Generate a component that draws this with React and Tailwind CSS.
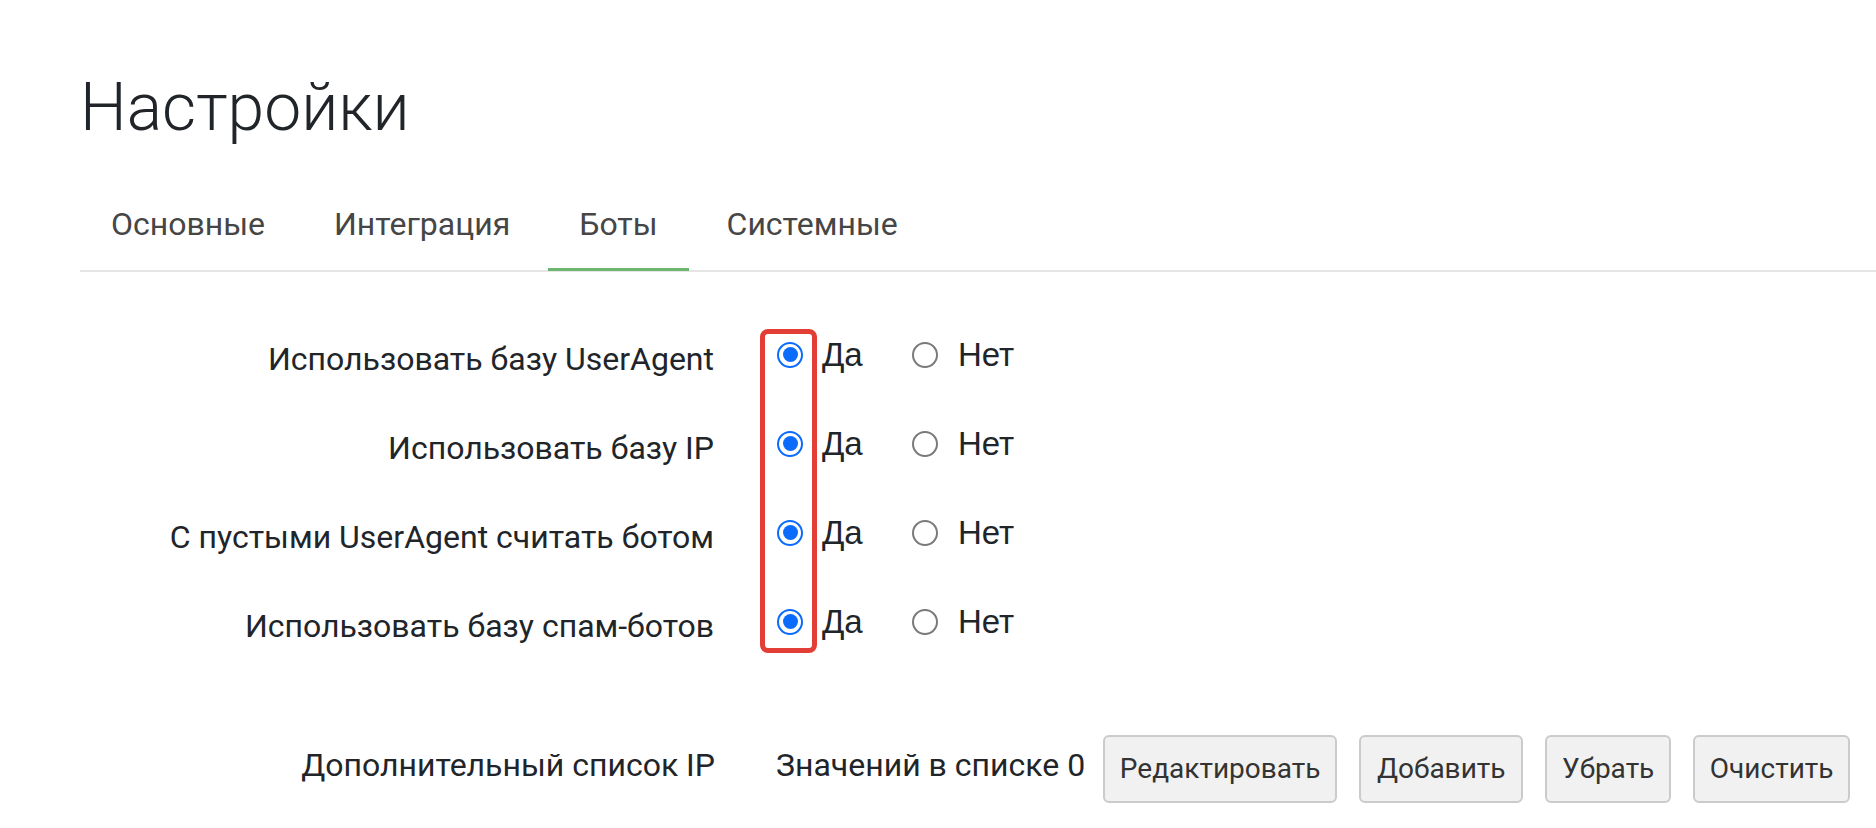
export default function App() {
  const tabs = [
    { label: "Основные", active: false },
    { label: "Интеграция", active: false },
    { label: "Боты", active: true },
    { label: "Системные", active: false },
  ];
  const rows = [
    "Использовать базу UserAgent",
    "Использовать базу IP",
    "С пустыми UserAgent считать ботом",
    "Использовать базу спам-ботов",
  ];
  const buttons = [
    { label: "Редактировать", w: "w-[234px]" },
    { label: "Добавить", w: "w-[164px]" },
    { label: "Убрать", w: "w-[126px]" },
    { label: "Очистить", w: "w-[157px]" },
  ];
  return (
    <div className="relative w-[1876px] h-[828px] bg-white overflow-hidden font-['Roboto',sans-serif] text-[#212529]">
      <h1 className="pl-[80px] pt-[67px] text-[66px] leading-[82px] font-light">Настройки</h1>

      <nav className="mt-[29px] ml-[80px] flex gap-[7px] border-b-2 border-[#e6e6e6]">
        {tabs.map((t) => (
          <div
            key={t.label}
            className={
              t.active
                ? "px-[31px] pt-[27px] pb-[25px] -mb-px text-[32px] leading-[38px] text-[#464646] border-b-[3px] border-[#6cb66f]"
                : "px-[31px] pt-[27px] pb-[25px] -mb-px text-[32px] leading-[38px] text-[#464646] border-b-[3px] border-transparent"
            }
          >
            {t.label}
          </div>
        ))}
      </nav>

      <div className="mt-[38px] flex flex-col">
        {rows.map((r) => (
          <div key={r} className="flex items-center h-[89px]">
            <div className="w-[714px] text-right pt-[8px] text-[32px] leading-[38px]">{r}</div>
            <div className="ml-[63px] flex items-center">
              <div className="flex items-center w-[135px]">
                <span className="w-[26px] h-[26px] rounded-full border-2 border-[#0b6cfb] flex items-center justify-center">
                  <span className="w-[15px] h-[15px] rounded-full bg-[#0b6cfb]" />
                </span>
                <span className="ml-[19px] text-[33px] leading-[38px] font-['Liberation_Sans',Arial,sans-serif]">Да</span>
              </div>
              <div className="flex items-center">
                <span className="w-[26px] h-[26px] rounded-full border-2 border-[#7a7a7a] bg-white" />
                <span className="ml-[20px] text-[33px] leading-[38px] font-['Liberation_Sans',Arial,sans-serif]">Нет</span>
              </div>
            </div>
          </div>
        ))}

        <div className="mt-[69px] flex items-center h-[68px]">
          <div className="w-[715px] text-right pb-[9px] text-[32px] leading-[38px]">Дополнительный список IP</div>
          <div className="ml-[61px] pb-[9px] text-[32px] leading-[38px]">Значений в списке 0</div>
          <div className="ml-[18px] flex gap-[22px]">
            {buttons.map((b) => (
              <button
                key={b.label}
                className={
                  b.w +
                  " h-[68px] border-2 border-[#cbcbcb] bg-[#f1f1f1] rounded-[6px] text-[28px] leading-[34px] text-[#333333] flex items-center justify-center"
                }
              >
                {b.label}
              </button>
            ))}
          </div>
        </div>
      </div>

      <div className="absolute left-[760px] top-[329px] w-[57px] h-[324px] border-[5px] border-[#e23e35] rounded-[8px] pointer-events-none" />
    </div>
  );
}
